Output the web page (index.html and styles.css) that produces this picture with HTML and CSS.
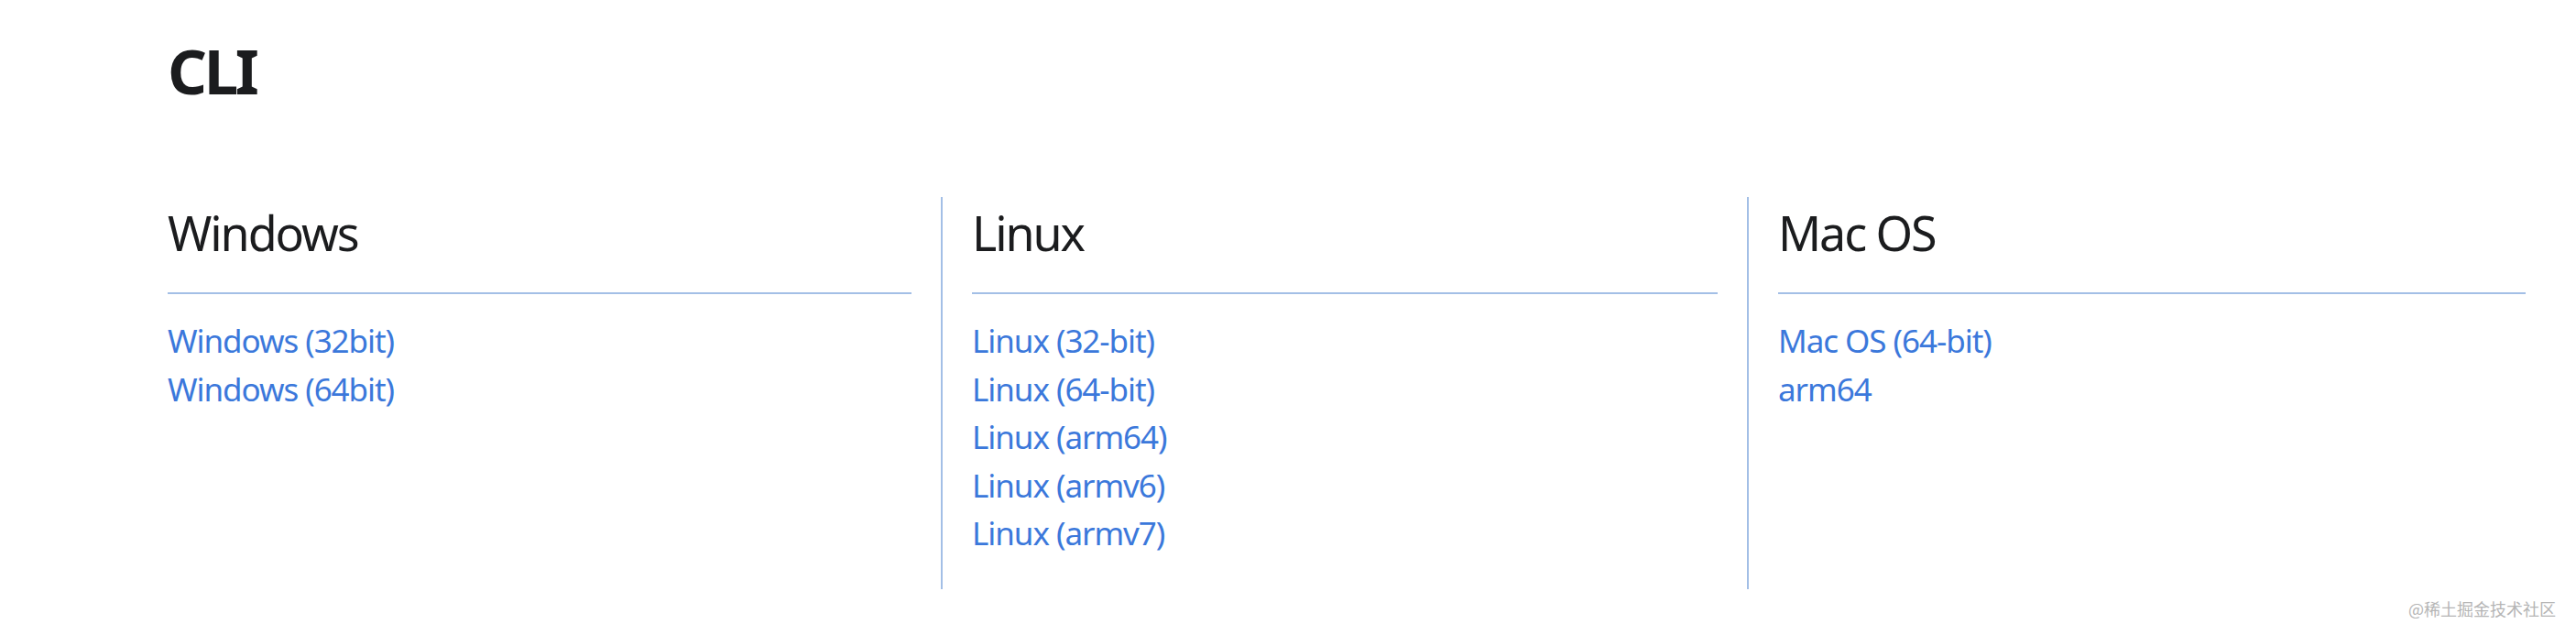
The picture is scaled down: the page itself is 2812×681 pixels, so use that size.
FILE: index.html
```html
<!DOCTYPE html>
<html lang="en">
<head>
<meta charset="utf-8">
<title>CLI downloads</title>
<link rel="stylesheet" href="styles.css">
</head>
<body>
<main class="page">
  <h2 class="title">CLI</h2>
  <div class="cols">
    <section class="col col-first">
      <h3 class="col-head">Windows</h3>
      <hr class="rule">
      <ul class="links">
        <li><a href="#">Windows (32bit)</a></li>
        <li><a href="#">Windows (64bit)</a></li>
      </ul>
    </section>
    <section class="col col-mid">
      <h3 class="col-head">Linux</h3>
      <hr class="rule">
      <ul class="links">
        <li><a href="#">Linux (32-bit)</a></li>
        <li><a href="#">Linux (64-bit)</a></li>
        <li><a href="#">Linux (arm64)</a></li>
        <li><a href="#">Linux (armv6)</a></li>
        <li><a href="#">Linux (armv7)</a></li>
      </ul>
    </section>
    <section class="col col-last">
      <h3 class="col-head">Mac OS</h3>
      <hr class="rule">
      <ul class="links">
        <li><a href="#">Mac OS (64-bit)</a></li>
        <li><a href="#">arm64</a></li>
      </ul>
    </section>
  </div>
</main>
<div class="watermark">@稀土掘金技术社区</div>
</body>
</html>
```
FILE: styles.css
```css
html, body {
  margin: 0;
  padding: 0;
  background: #ffffff;
}
body {
  font-family: "Noto Sans", "Open Sans", Arial, sans-serif;
  color: #1b1c1e;
  width: 2812px;
  height: 681px;
  overflow: hidden;
  position: relative;
}
.page {
  padding: 42px 0 0 183px;
}
.title {
  margin: 0;
  font-size: 67px;
  line-height: 70px;
  font-weight: 700;
  letter-spacing: -0.05em;
  color: #1b1c1e;
}
.cols {
  margin-top: 103px;
  display: grid;
  grid-template-columns: 844px 880px 882px;
}
.col {
  padding: 6px 32px 34px 32px;
  border-left: 2px solid #a3bfe6;
}
.col-first {
  padding-left: 0;
  border-left: none;
}
.col-head {
  margin: 0;
  font-size: 52px;
  line-height: 65px;
  font-weight: 400;
  letter-spacing: -0.04em;
  color: #1b1c1e;
}
.rule {
  margin: 33px 0 25px 0;
  border: none;
  height: 2px;
  background: #a3bfe6;
}
.links {
  list-style: none;
  margin: 0;
  padding: 0;
}
.links li {
  font-size: 35px;
  line-height: 52.5px;
}
.links a {
  color: #3b78db;
  text-decoration: none;
  letter-spacing: -0.03em;
}
.watermark {
  position: absolute;
  right: 22px;
  bottom: 4px;
  font-family: "Noto Sans CJK SC", sans-serif;
  font-size: 18px;
  color: #b5b5b5;
}
```
